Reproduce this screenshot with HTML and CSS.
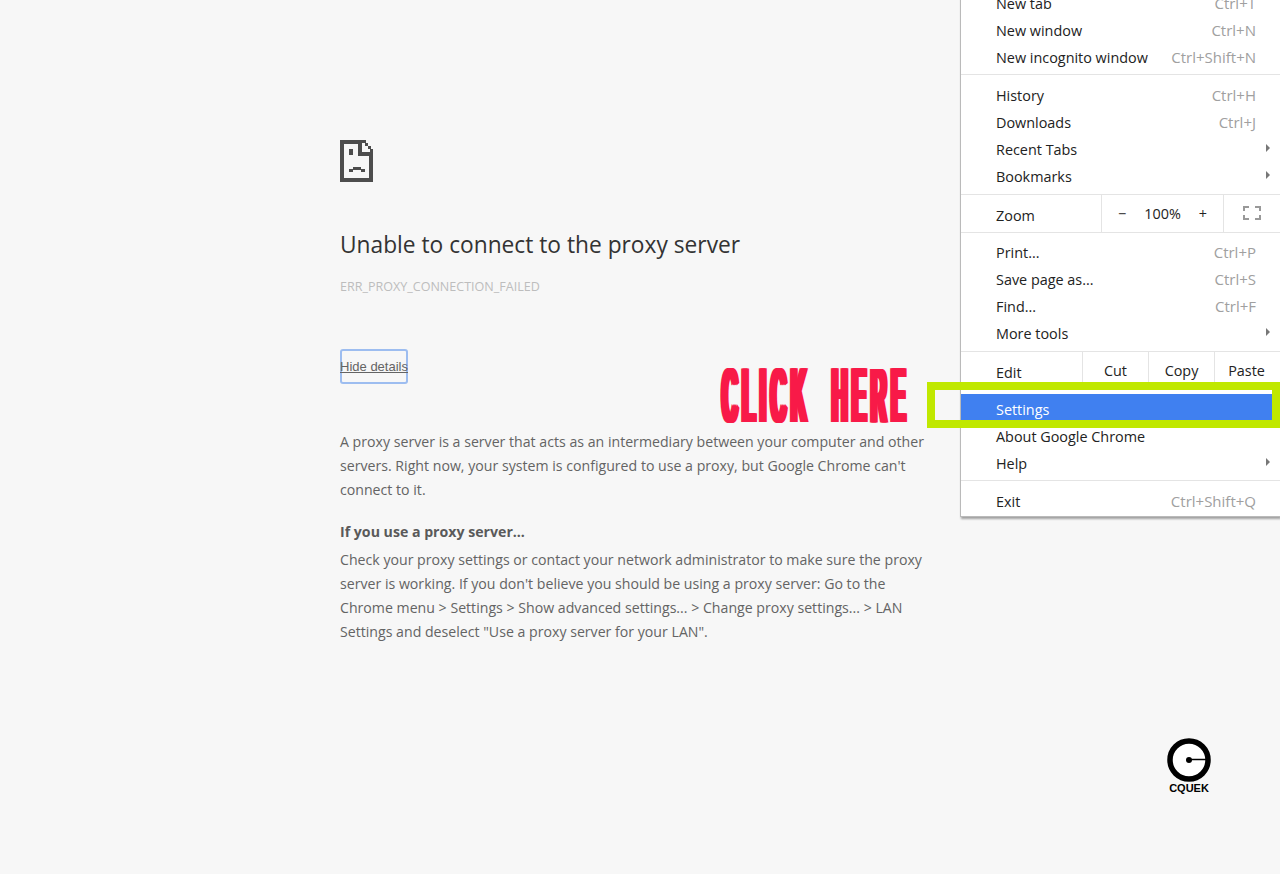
FILE: index.html
```html
<!doctype html>
<html lang="en">
<head>
	<meta charset="UTF-8">
	<title>Unable to connect to the proxy server</title>
	<link rel="stylesheet" href="styles.css">
</head>
<body>
	<div class="error">
		<svg class="sad-page" width="33" height="42" viewBox="0 0 33 42" shape-rendering="crispEdges">
			<path fill="#4d4d4d" d="M0 0h22v4H4v34h25V16H18V0h4v12h11v30H0zM22 0h4v3h-4zM25 3h3v3h-3zM28 6h3v3h-3zM30 9h3v3h-3z"/>
			<path fill="#4d4d4d" d="M9 9h4v6H9zM13 27h8v3h-8zM9 29h4v3H9zM21 29h4v3h-4z"/>
		</svg>
		<h1 class="error-title">Unable to connect to the proxy server</h1>
		<div class="error-code">ERR_PROXY_CONNECTION_FAILED</div>
		<button class="details-btn">Hide details</button>
		<p class="error-text">A proxy server is a server that acts as an intermediary between your computer and other servers. Right now, your system is configured to use a proxy, but Google Chrome can't connect to it.</p>
		<h2 class="error-sub">If you use a proxy server...</h2>
		<p class="error-text">Check your proxy settings or contact your network administrator to make sure the proxy server is working. If you don't believe you should be using a proxy server: Go to the Chrome menu &gt; Settings &gt; Show advanced settings... &gt; Change proxy settings... &gt; LAN Settings and deselect "Use a proxy server for your LAN".</p>
	</div>

	<div class="menu">
		<div class="menu-group">
			<div class="menu-item"><span>New tab</span><span class="key">Ctrl+T</span></div>
			<div class="menu-item"><span>New window</span><span class="key">Ctrl+N</span></div>
			<div class="menu-item"><span>New incognito window</span><span class="key">Ctrl+Shift+N</span></div>
		</div>
		<div class="menu-group">
			<div class="menu-item"><span>History</span><span class="key">Ctrl+H</span></div>
			<div class="menu-item"><span>Downloads</span><span class="key">Ctrl+J</span></div>
			<div class="menu-item sub"><span>Recent Tabs</span></div>
			<div class="menu-item sub"><span>Bookmarks</span></div>
		</div>
		<div class="menu-row zoom-row">
			<span class="row-label">Zoom</span>
			<div class="zoom-ctrl"><span>−</span><span>100%</span><span>+</span></div>
			<div class="zoom-full">
				<svg width="18" height="14" viewBox="0 0 18 14" shape-rendering="crispEdges"><path fill="#999" d="M0 0h6v2H2v3H0zM12 0h6v5h-2V2h-4zM0 9h2v3h4v2H0zM16 9h2v5h-6v-2h4z"/></svg>
			</div>
		</div>
		<div class="menu-group">
			<div class="menu-item"><span>Print...</span><span class="key">Ctrl+P</span></div>
			<div class="menu-item"><span>Save page as...</span><span class="key">Ctrl+S</span></div>
			<div class="menu-item"><span>Find...</span><span class="key">Ctrl+F</span></div>
			<div class="menu-item sub"><span>More tools</span></div>
		</div>
		<div class="menu-row edit-row">
			<span class="row-label">Edit</span>
			<span class="edit-btn">Cut</span>
			<span class="edit-btn">Copy</span>
			<span class="edit-btn">Paste</span>
		</div>
		<div class="menu-group last-group">
			<div class="menu-item active"><span>Settings</span></div>
			<div class="menu-item"><span>About Google Chrome</span></div>
			<div class="menu-item sub"><span>Help</span></div>
		</div>
		<div class="menu-group exit-group">
			<div class="menu-item"><span>Exit</span><span class="key">Ctrl+Shift+Q</span></div>
		</div>
	</div>

	<!-- annotations on top of the screenshot -->
	<div class="click-here"><span>CLICK</span><span>HERE</span></div>
	<div class="highlight"></div>
	<div class="logo">
		<svg width="44" height="44" viewBox="0 0 44 44">
			<circle cx="22" cy="22" r="19" fill="#fff" stroke="#000" stroke-width="5.5"/>
			<circle cx="22" cy="22" r="3" fill="#000"/>
			<path d="M22 21.5h17" stroke="#000" stroke-width="1.5"/>
			<circle cx="36" cy="33" r="1" fill="#000"/>
		</svg>
		<div class="logo-text">CQUEK</div>
	</div>
</body>
</html>
```

FILE: styles.css
```css
html,body{margin:0;height:100%;}
body{background:#f7f7f7;font-family:"Open Sans","Noto Sans",sans-serif;overflow:hidden;}

.error{width:590px;margin-left:340px;padding-top:140px;color:#646464;font-size:14.15px;line-height:24px;}
.sad-page{display:block;}
.error-title{margin:48px 0 0;font-size:22.74px;line-height:30px;font-weight:400;color:#333;}
.error-code{margin-top:17px;font-size:12.56px;line-height:20px;color:#bdbdbd;}
.details-btn{display:block;box-sizing:border-box;width:68px;height:35px;margin-top:52px;padding:0;border:0;border-radius:3px;box-shadow:inset 0 0 0 2px #9dbdf0;background:none;color:#646464;font-family:"Liberation Sans",sans-serif;font-size:13px;text-decoration:underline;white-space:nowrap;}
.error-text{margin:0;}
.details-btn + .error-text{margin-top:46px;}
.error-sub{margin:18px 0 4px;font-size:14.15px;line-height:24px;font-weight:700;color:#5a5a5a;}

.menu{position:absolute;top:-10px;right:0;box-sizing:border-box;width:320px;height:527px;background:#fff;border:1px solid #bababa;border-right:0;border-top:0;box-shadow:1px 2px 2px rgba(0,0,0,.35);font-size:14.4px;color:#222;}
.menu-group{padding:0 0 3px;border-bottom:1px solid #e4e4e4;}
.menu-group + .menu-group{padding:7px 0 4px;}
.menu-item{display:flex;justify-content:space-between;align-items:center;height:27px;padding:0 24px 0 35px;position:relative;}
.key{margin-top:-2px;color:#a0a0a0;font-size:15px;}
.menu-item.sub::after{content:"";position:absolute;right:10px;top:8px;border-left:4px solid #777;border-top:4px solid transparent;border-bottom:4px solid transparent;}
.menu-item.active{background:#4080f0;color:#fff;height:27px;padding-top:2px;}

.menu-row{display:flex;align-items:stretch;border-bottom:1px solid #e4e4e4;}
.row-label{padding-left:35px;}
.zoom-row{height:37px;}
.zoom-row .row-label{width:140px;box-sizing:border-box;line-height:41px;}
.zoom-ctrl{display:flex;justify-content:space-between;box-sizing:border-box;width:123px;padding:0 16px;border-left:1px solid #e4e4e4;border-right:1px solid #e4e4e4;line-height:38px;}
.zoom-full{flex:1;display:flex;align-items:center;justify-content:center;padding-bottom:1px;}
.menu-group + .zoom-row + .menu-group{padding:6px 0 4px;}

.edit-row{height:38px;margin-bottom:4px;border-bottom:0;}
.edit-row .row-label{width:121px;box-sizing:border-box;line-height:42px;}
.edit-btn{width:65px;text-align:center;line-height:37px;border-left:1px solid #e4e4e4;}
.edit-btn:last-child{flex:1;padding-right:2px;}
.menu-group.last-group{padding:0 0 3px;}
.menu-group.exit-group{border-bottom:0;padding:7px 0 0;}

/* no condensed poster font here, so squeeze a bold one and fatten the stems */
.click-here{position:absolute;left:722px;top:368px;width:672px;height:55px;display:flex;justify-content:space-between;color:#f81a48;font-family:"Liberation Sans",sans-serif;font-weight:700;font-size:77px;line-height:55px;letter-spacing:16.5px;transform:scaleX(.28);transform-origin:left top;text-shadow:-8.5px 0 #f81a48,-4px 0 #f81a48,4px 0 #f81a48,8.5px 0 #f81a48;}
.highlight{position:absolute;left:927px;top:382px;width:353px;height:46px;box-sizing:border-box;border:8px solid #c0e800;}
.logo{position:absolute;left:1167px;top:738px;width:44px;}
.logo svg{display:block;}
.logo-text{text-align:center;font-family:"Liberation Sans",sans-serif;font-size:11px;line-height:12px;font-weight:700;color:#000;}
```
